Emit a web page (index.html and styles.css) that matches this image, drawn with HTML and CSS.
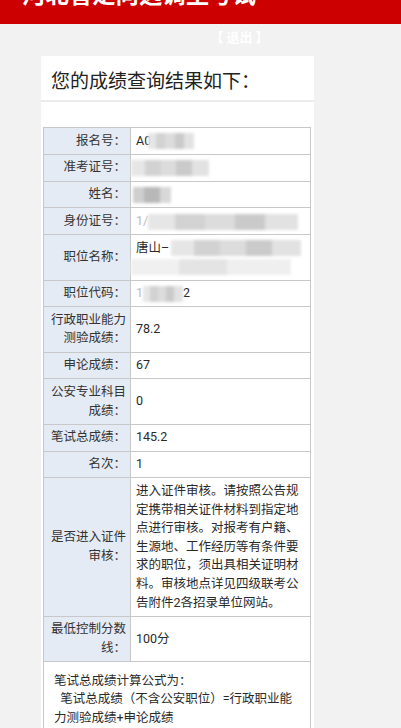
FILE: index.html
```html
<!DOCTYPE html>
<html lang="zh-CN">
<head>
<meta charset="utf-8">
<title>成绩查询</title>
<link rel="stylesheet" href="styles.css">
</head>
<body>
<div class="topbar"><div class="topbar-title">河北省定向选调生考试</div></div>
<div class="exit">【 退出 】</div>
<div class="card">
  <div class="card-title">您的成绩查询结果如下：</div>
  <div class="card-body">
    <table class="score">
      <colgroup><col class="col-label"><col class="col-value"></colgroup>
      <tr><th>报名号：</th><td>A0<span class="mosaic m-id"></span></td></tr>
      <tr><th>准考证号：</th><td><span class="mosaic m-exam"></span></td></tr>
      <tr><th>姓名：</th><td><span class="mosaic m-name"></span></td></tr>
      <tr><th>身份证号：</th><td class="nowrap"><span class="faint">1/</span><span class="mosaic m-card"></span></td></tr>
      <tr><th>职位名称：</th><td>唐山–<span class="mosaic m-pos1"></span><br><span class="mosaic m-pos2"></span></td></tr>
      <tr><th>职位代码：</th><td><span class="faint">1</span><span class="mosaic m-code"></span>2</td></tr>
      <tr><th>行政职业能力测验成绩：</th><td>78.2</td></tr>
      <tr><th>申论成绩：</th><td>67</td></tr>
      <tr><th>公安专业科目成绩：</th><td>0</td></tr>
      <tr><th>笔试总成绩：</th><td>145.2</td></tr>
      <tr><th>名次：</th><td>1</td></tr>
      <tr><th>是否进入证件审核：</th><td>进入证件审核。请按照公告规定携带相关证件材料到指定地点进行审核。对报考有户籍、生源地、工作经历等有条件要求的职位，须出具相关证明材料。审核地点详见四级联考公告附件2各招录单位网站。</td></tr>
      <tr><th>最低控制分数线：</th><td>100分</td></tr>
      <tr><td class="formula" colspan="2">笔试总成绩计算公式为：<br>&nbsp;&nbsp;笔试总成绩（不含公安职位）=行政职业能力测验成绩+申论成绩</td></tr>
    </table>
  </div>
</div>
</body>
</html>
```
FILE: styles.css
```css
body {
  margin: 0;
  background: #f2f2f2;
  font-family: Roboto, "Noto Sans CJK SC", sans-serif;
  color: #333;
}

.topbar {
  height: 24px;
  background: #cc0000;
  overflow: hidden;
}

.topbar-title {
  margin: -19px 0 0 22px;
  font-family: "Noto Sans CJK SC", sans-serif;
  font-size: 23.4px;
  line-height: 24px;
  font-weight: bold;
  color: #fff;
  white-space: nowrap;
}

.exit {
  height: 32px;
  line-height: 26px;
  padding-left: 78px;
  text-align: center;
  font-family: "Noto Sans CJK SC", sans-serif;
  font-size: 13px;
  font-weight: bold;
  color: #fff;
}

.card {
  width: 273px;
  margin-left: 41px;
  background: #fff;
}

.card-title {
  padding: 16px 10px 8px;
  line-height: 20px;
  font-size: 19px;
  color: #222;
  border-bottom: 2px solid #ebebeb;
}

.card-body {
  padding: 25px 3px 0 2px;
}

.score {
  width: 268px;
  table-layout: fixed;
  border-collapse: collapse;
  font-size: 12.5px;
  line-height: 18.6px;
}

.col-label {
  width: 87px;
}

.score th,
.score td {
  border: 1px solid #c8c8c8;
  padding: 3.6px 5px;
  vertical-align: middle;
}

.score th {
  background: #e5ebf4;
  text-align: right;
  font-weight: normal;
  padding-right: 4px;
}

.score td {
  text-align: left;
  color: #2a2a2a;
}

.score td.nowrap {
  white-space: nowrap;
  overflow: hidden;
}

.score td.formula {
  padding: 9.5px 10px;
}

.faint {
  color: #bbb;
}

.mosaic {
  display: inline-block;
  height: 16px;
  vertical-align: middle;
  background: linear-gradient(90deg, #e6e6e6 0 18%, #d2d2d2 18% 38%, #dcdcdc 38% 58%, #cacaca 58% 78%, #e2e2e2 78%);
  filter: blur(1.5px);
}

.m-id { width: 46px; margin-left: -3px; }
.m-exam { width: 78px; margin-left: -5px; }
.m-name { width: 38px; margin-left: -3px; background: linear-gradient(90deg, #cfcfcf 0 30%, #b8b8b8 30% 70%, #d8d8d8 70%); }
.m-card { width: 150px; }
.m-pos1 { width: 130px; margin-left: 2px; }
.m-pos2 { width: 160px; margin-left: -5px; background: linear-gradient(90deg, #f0f0f0 0 30%, #e4e4e4 30% 60%, #efefef 60%); }
.m-code { width: 40px; }
```
